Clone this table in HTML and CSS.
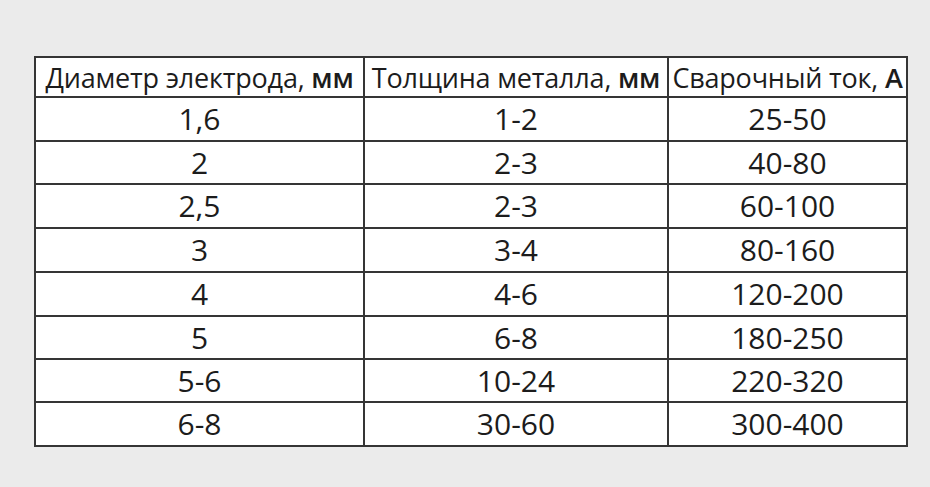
FILE: index.html
```html
<!DOCTYPE html>
<html lang="ru">
<head>
<meta charset="utf-8">
<title>Сварочный ток</title>
<link rel="stylesheet" href="styles.css">
</head>
<body>
<div class="page">
  <div class="table" role="table">
    <div class="cell head" role="columnheader">Диаметр электрода, <b class="unit">мм</b></div>
    <div class="cell head" role="columnheader">Толщина металла, <b class="unit">мм</b></div>
    <div class="cell head" role="columnheader">Сварочный ток, <b class="unit">А</b></div>

    <div class="cell">1,6</div><div class="cell">1-2</div><div class="cell">25-50</div>
    <div class="cell">2</div><div class="cell">2-3</div><div class="cell">40-80</div>
    <div class="cell">2,5</div><div class="cell">2-3</div><div class="cell">60-100</div>
    <div class="cell">3</div><div class="cell">3-4</div><div class="cell">80-160</div>
    <div class="cell">4</div><div class="cell">4-6</div><div class="cell">120-200</div>
    <div class="cell">5</div><div class="cell">6-8</div><div class="cell">180-250</div>
    <div class="cell">5-6</div><div class="cell">10-24</div><div class="cell">220-320</div>
    <div class="cell">6-8</div><div class="cell">30-60</div><div class="cell">300-400</div>
  </div>
</div>
</body>
</html>
```
FILE: styles.css
```css
html, body {
  margin: 0;
  padding: 0;
  background: #ebebeb;
}
body {
  width: 930px;
  height: 487px;
  overflow: hidden;
  font-family: "Open Sans", "Noto Sans", sans-serif;
  color: #1c1c1c;
}
.page {
  padding: 56px 0 0 34px;
}
.table {
  display: grid;
  width: max-content;
  grid-template-columns: 327px 302px 237px;
  grid-template-rows: 38px 42px 41px 42px 42px 42px 41px 41px 42px;
  gap: 2px;
  padding: 2px;
  background: #353535;
}
.cell {
  background: #fff;
  display: flex;
  align-items: center;
  justify-content: center;
  font-size: 30px;
  line-height: 1;
  white-space: nowrap;
}
.cell.head {
  font-size: 27px;
  letter-spacing: -0.2px;
  white-space: pre;
}
.unit {
  font-weight: 600;
}
```
